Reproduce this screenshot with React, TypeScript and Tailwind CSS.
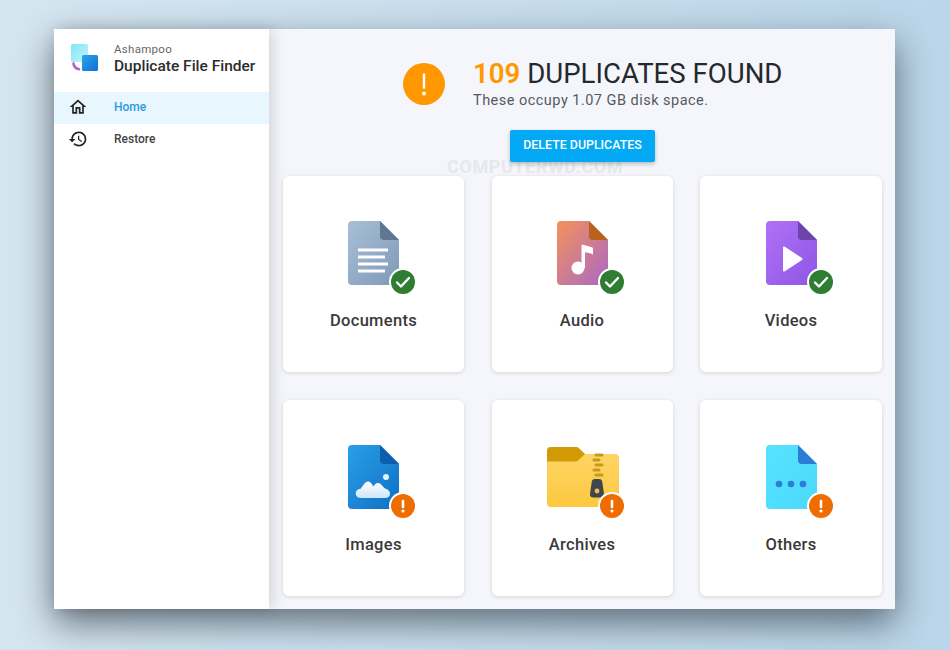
import type { ReactNode } from "react"

function Badge({ kind }: { kind: "ok" | "warn" }) {
  if (kind === "ok") {
    return (
      <svg viewBox="0 0 28 28" className="absolute left-[41px] top-[47px] h-[28px] w-[28px]">
        <circle cx="14" cy="14" r="14" fill="#fff" />
        <circle cx="14" cy="14" r="12" fill="#2e7d32" />
        <path d="M8 14.500l4 4 8-8.500" fill="none" stroke="#fff" strokeWidth="2.400" strokeLinecap="round" strokeLinejoin="round" />
      </svg>
    )
  }
  return (
    <svg viewBox="0 0 28 28" className="absolute left-[41px] top-[47px] h-[28px] w-[28px]">
      <circle cx="14" cy="14" r="14" fill="#fff" />
      <circle cx="14" cy="14" r="12" fill="#ef6c00" />
      <path d="M14 9v6" stroke="#fff" strokeWidth="2.600" strokeLinecap="round" />
      <circle cx="14" cy="19" r="1.600" fill="#fff" />
    </svg>
  )
}

// base file shape used by most of the cards, 52x64 with the corner folded
function FileShape({ id, from, to, fold, children }: { id: string; from: string; to: string; fold: string; children?: ReactNode }) {
  return (
    <svg viewBox="0 0 52 64" className="h-[64px] w-[52px] shrink-0">
      <defs>
        <linearGradient id={id} x1="0" y1="0" x2="1" y2="1">
          <stop offset="0" stopColor={from} />
          <stop offset="1" stopColor={to} />
        </linearGradient>
      </defs>
      <path d="M4 0h28l19 19v41a4 4 0 0 1-4 4H4a4 4 0 0 1-4-4V4a4 4 0 0 1 4-4z" fill={`url(#${id})`} />
      <path d="M32 0l19 19H36a4 4 0 0 1-4-4z" fill={fold} />
      {children}
    </svg>
  )
}

function DocIcon() {
  return (
    <FileShape id="doc" from="#a9bfd8" to="#7f99b6" fold="#5d7890">
      <path d="M10 29h30M10 36h27M10 43h30M10 50h27" stroke="#fff" strokeWidth="3" />
    </FileShape>
  )
}

function AudioIcon() {
  return (
    <FileShape id="aud" from="#f4925a" to="#a968c6" fold="#b8621b">
      <circle cx="21" cy="47" r="6.500" fill="#fff" />
      <path d="M24.500 47V25c0-1 .600-1.500 1.500-1.200l9 2.500c.800.300 1 1 1 1.700v5.500c-3-1.500-5.500-2-8-2V47z" fill="#fff" />
    </FileShape>
  )
}

function VideoIcon() {
  return (
    <FileShape id="vid" from="#b071f5" to="#8e56e6" fold="#6d44ad">
      <path d="M17 26.500c0-.800.800-1.300 1.500-.900l17.500 11.500c.700.400.700 1.400 0 1.800l-17.500 11.500c-.700.400-1.500-.100-1.500-.900z" fill="#fff" />
    </FileShape>
  )
}

function ImageIcon() {
  return (
    <FileShape id="img" from="#2a9fe8" to="#0f6fc4" fold="#0d5fae">
      <defs>
        <linearGradient id="cloud" x1="0" y1="0" x2="0" y2="1">
          <stop offset="0" stopColor="#ffffff" />
          <stop offset="1" stopColor="#cfe8f8" />
        </linearGradient>
      </defs>
      <circle cx="38" cy="32" r="3" fill="#e6f4fc" />
      <path d="M13 53c-4 0-6-3-5-6 .700-2.200 3-3 5-3.500 2-3 4-7 7-7 2.500 0 3.500 2 5.500 5 1-2 2.500-3.500 4.500-3.500 3 0 4.500 3.500 7 5.500 3 1 5 2.500 5 5 0 3-2 4.500-5 4.500z" fill="url(#cloud)" />
    </FileShape>
  )
}

function ArchiveIcon() {
  return (
    <svg viewBox="0 0 72 60" className="h-[60px] w-[72px] shrink-0">
      <defs>
        <linearGradient id="fold" x1="0" y1="0" x2="0" y2="1">
          <stop offset="0" stopColor="#fcd66b" />
          <stop offset="1" stopColor="#fdc83e" />
        </linearGradient>
      </defs>
      <path d="M4 0h25c1 0 2 .400 2.700 1.100L38 7h30a4 4 0 0 1 4 4v45a4 4 0 0 1-4 4H4a4 4 0 0 1-4-4V4a4 4 0 0 1 4-4z" fill="url(#fold)" />
      <path d="M4 0h25c1 0 2 .400 2.700 1.100L38 7l-7 6.500c-.700.600-1.500 1-2.500 1H0V4a4 4 0 0 1 4-4z" fill="#d29b06" />
      <path d="M49 8h6M47 13h5M49 18h6M47 23h5M49 28h6" stroke="#c79a1a" strokeWidth="3" strokeLinecap="round" />
      <path d="M48 32h4c2 0 3 1 3.300 3l1.700 12c.300 2-1 3.500-3 3.500h-8c-2 0-3.300-1.500-3-3.500l1.700-12c.300-2 1.300-3 3.300-3z" fill="#3f4650" />
      <circle cx="50" cy="44" r="2.400" fill="#e9c14a" />
    </svg>
  )
}

function OtherIcon() {
  return (
    <FileShape id="oth" from="#54e3ff" to="#4cd9fb" fold="#2d7dd8">
      <circle cx="13" cy="39" r="3.300" fill="#2d7dd8" />
      <circle cx="25" cy="39" r="3.300" fill="#2d7dd8" />
      <circle cx="37" cy="39" r="3.300" fill="#2d7dd8" />
    </FileShape>
  )
}

function Logo() {
  return (
    <svg viewBox="0 0 28 30" className="h-[30px] w-[28px] shrink-0">
      <defs>
        <linearGradient id="lg1" x1="0" y1="0" x2="1" y2="1">
          <stop offset="0" stopColor="#7fe6f8" />
          <stop offset="1" stopColor="#c4f3fb" />
        </linearGradient>
        <linearGradient id="lg2" x1="0" y1="0" x2="1" y2="1">
          <stop offset="0" stopColor="#2aa3ee" />
          <stop offset="1" stopColor="#0f6fd4" />
        </linearGradient>
      </defs>
      <rect x="0" y="0" width="17" height="18" rx="1.500" fill="url(#lg1)" />
      <rect x="11" y="11" width="16" height="16" rx="1.500" fill="url(#lg2)" />
      <path d="M2.500 19.500c.300 2.800 2.200 5 5.500 5.700" fill="none" stroke="#b65fd0" strokeWidth="2.600" strokeLinecap="round" />
    </svg>
  )
}

function HomeIcon() {
  return (
    <svg viewBox="0 0 24 24" className="h-[20px] w-[20px] shrink-0" fill="#222">
      <path d="M12 5.690l5 4.500V18h-2v-6H9v6H7v-7.810l5-4.500M12 3L2 12h3v8h6v-6h2v6h6v-8h3L12 3z" />
    </svg>
  )
}

function RestoreIcon() {
  return (
    <svg viewBox="0 0 24 24" className="h-[20px] w-[20px] shrink-0" fill="#222">
      <path d="M13 3c-4.970 0-9 4.030-9 9H1l3.890 3.890.070.140L9 12H6c0-3.870 3.130-7 7-7s7 3.130 7 7-3.130 7-7 7c-1.930 0-3.680-.790-4.940-2.060l-1.420 1.420C8.270 19.990 10.510 21 13 21c4.970 0 9-4.030 9-9s-4.030-9-9-9zm-1 5v5l4.280 2.540.720-1.210-3.500-2.080V8H12z" />
    </svg>
  )
}

const cards = [
  { label: "Documents", icon: <DocIcon />, status: "ok" as const },
  { label: "Audio", icon: <AudioIcon />, status: "ok" as const },
  { label: "Videos", icon: <VideoIcon />, status: "ok" as const },
  { label: "Images", icon: <ImageIcon />, status: "warn" as const },
  { label: "Archives", icon: <ArchiveIcon />, status: "warn" as const },
  { label: "Others", icon: <OtherIcon />, status: "warn" as const },
]

export default function App() {
  return (
    <div className="h-[650px] w-[950px] overflow-hidden bg-gradient-to-r from-[#d6e6f1] to-[#bbd6e9] pl-[54px] pt-[29px] font-['Roboto',sans-serif]">
      <div className="flex h-[580px] w-[841px] bg-[#f4f6fb] shadow-[0_14px_34px_rgba(30,40,50,0.62)]">
        <aside className="relative z-10 w-[215px] shrink-0 bg-white shadow-[3px_0_14px_rgba(0,0,0,0.15)]">
          <div className="flex h-[63px] items-center pb-[3px] pl-[17px]">
            <Logo />
            <div className="ml-[15px]">
              <div className="text-[11.500px] leading-[15px] tracking-[0.3px] text-[#666]">Ashampoo</div>
              <div className="text-[15.500px] font-medium leading-[19px] text-[#2c2c2c]">Duplicate File Finder</div>
            </div>
          </div>
          <nav>
            <div className="flex h-[32px] items-center bg-[#e8f6fd] pb-[2px] pl-[14px] text-[12px] font-medium text-[#2b9be6]">
              <HomeIcon />
              <span className="ml-[26px]">Home</span>
            </div>
            <div className="flex h-[32px] items-center pb-[2px] pl-[14px] text-[12px] font-medium text-[#444]">
              <RestoreIcon />
              <span className="ml-[26px]">Restore</span>
            </div>
          </nav>
        </aside>
        <main className="relative flex-1 pl-[14px] pr-[13px] pt-[28px]">
          <div className="flex h-[73px] items-start pl-[120px] pt-[6px]">
            <svg viewBox="0 0 42 42" className="h-[42px] w-[42px] shrink-0">
              <circle cx="21" cy="21" r="21" fill="#ff9800" />
              <path d="M21 11.500v13" stroke="#fff" strokeWidth="2.400" strokeLinecap="round" />
              <circle cx="21" cy="30.500" r="1.900" fill="#fff" />
            </svg>
            <div className="ml-[28px] -mt-[7px]">
              <div className="text-[27.600px] leading-[35px] text-[#25282d]">
                <span className="font-semibold text-[#ff9800]">109</span> DUPLICATES FOUND
              </div>
              <div className="mt-[1px] text-[14.500px] leading-[18px] tracking-[0.48px] text-[#555a60]">These occupy 1.07 GB disk space.</div>
            </div>
          </div>
          <div className="flex justify-center">
            <button className="relative z-10 h-[32px] w-[145px] rounded-[2px] bg-[#03a9f4] pb-[2px] text-[12.400px] font-medium text-white shadow-[0_2px_4px_rgba(0,0,0,0.25)]">
              DELETE DUPLICATES
            </button>
          </div>
          <div className="pointer-events-none absolute left-[178px] top-[124px] text-[18px] font-bold tracking-[0.6px] text-[#e6e8ec]">COMPUTERWD.COM</div>
          <div className="relative mt-[14px] grid grid-cols-[181px_181px_182px] gap-x-[27.500px] gap-y-[28px]">
            {cards.map((c) => (
              <div key={c.label} className="flex h-[196px] flex-col items-center rounded-[6px] bg-white shadow-[0_1px_4px_rgba(0,0,0,0.14)]">
                <div className="relative ml-[1px] mt-[45px] flex h-[64px] w-[52px] items-center justify-center">
                  {c.icon}
                  <Badge kind={c.status} />
                </div>
                <div className="mt-[26px] text-[16.500px] font-medium leading-[20px] tracking-[0.3px] text-[#3a3a3a]">{c.label}</div>
              </div>
            ))}
          </div>
        </main>
      </div>
    </div>
  )
}
